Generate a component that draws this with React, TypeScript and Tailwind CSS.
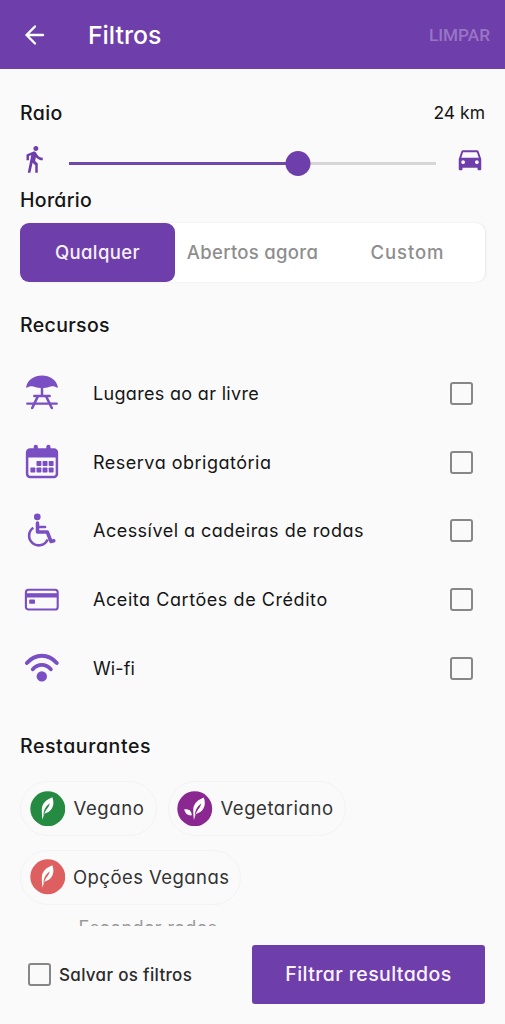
import React, { useState } from 'react';
import { MdDirectionsCar, MdDirectionsWalk } from 'react-icons/md';

const ParasolIcon = () => (
  <svg viewBox="0 0 36 36" className="h-9 w-9 text-[#7b4fc4]" fill="none" stroke="currentColor" strokeLinecap="round">
    <path
      d="M2.200 11.700C4 4.600 10.200.6 18 .6s14 4 15.800 11.100c.2.900-.5 1.300-1.200.9-2.200-1.600-5-1.900-7.600-.7-4 1.500-10 1.500-14 0-2.600-1.200-5.400-.9-7.600.7-.7.400-1.400 0-1.200-.9z"
      fill="currentColor"
      stroke="none"
    />
    <path d="M18 10v10" strokeWidth="2.500" />
    <path d="M10.300 21h15.400M3.300 28.600h29.400" strokeWidth="2.400" />
    <path d="M13.800 21.500L8.200 33M22.200 21.500L27.800 33" strokeWidth="2.600" />
  </svg>
);

const CalendarIcon = () => (
  <svg viewBox="0 0 36 36" className="h-9 w-9 text-[#7b4fc4]" fill="currentColor">
    <rect x="3.100" y="5.600" width="29.800" height="27.400" rx="3" fill="none" stroke="currentColor" strokeWidth="2.500" />
    <path d="M3 6h30v7.500H3z" />
    <rect x="9.700" y="0.700" width="4.200" height="7" rx="2" />
    <rect x="22.300" y="0.700" width="4.200" height="7" rx="2" />
    <rect x="12.500" y="17" width="4.900" height="4.900" rx="0.700" />
    <rect x="18.600" y="17" width="4.900" height="4.900" rx="0.700" />
    <rect x="24.700" y="17" width="4.900" height="4.900" rx="0.700" />
    <rect x="6.400" y="23.600" width="4.900" height="4.900" rx="0.700" />
    <rect x="12.500" y="23.600" width="4.900" height="4.900" rx="0.700" />
    <rect x="18.600" y="23.600" width="4.900" height="4.900" rx="0.700" />
    <rect x="24.700" y="23.600" width="4.900" height="4.900" rx="0.700" />
  </svg>
);

const WheelchairIcon = () => (
  <svg viewBox="0 0 36 36" className="h-9 w-9 text-[#7b4fc4]" fill="none" stroke="currentColor" strokeLinecap="round" strokeLinejoin="round">
    <circle cx="13.300" cy="3.900" r="3.300" fill="currentColor" stroke="none" />
    <path d="M13.500 10v9h9.800l3.700 9.500 2.800-.8" strokeWidth="3.500" />
    <path d="M14 14h7" strokeWidth="2.600" />
    <path d="M9.300 14.800a9.600 9.600 0 1 0 14.300 11.600" strokeWidth="2.600" strokeLinecap="butt" />
  </svg>
);

const CardIcon = () => (
  <svg viewBox="0 0 36 36" className="h-9 w-9 text-[#7b4fc4]" fill="currentColor">
    <rect x="1.900" y="7.700" width="31.800" height="19.800" rx="2.600" fill="none" stroke="currentColor" strokeWidth="2.100" />
    <path d="M2 11.200h31.600v4.300H2z" />
    <rect x="5.200" y="17.600" width="5.800" height="4.200" rx="0.900" />
  </svg>
);

const WifiIcon = () => (
  <svg viewBox="0 0 36 36" className="h-9 w-9 text-[#7b4fc4]" fill="none" stroke="currentColor" strokeWidth="3.900" strokeLinecap="round">
    <path d="M2.900 13C11.300 3.300 24.400 3.300 32.800 13" />
    <path d="M8.800 19.200c5.200-5.800 12.800-5.800 18 0" />
    <circle cx="17.800" cy="26.400" r="5.200" fill="currentColor" stroke="none" />
  </svg>
);

const Leaf = () => (
  <>
    <path
      d="M22.700 6.300C17 8.500 12.300 12 12 18.200c-.1 4 .2 7.500.7 10.900.7-2.600 1.200-4.500 2.100-6.200C21 21.400 26 15.500 22.700 6.300z"
      fill="#fff"
    />
    <path d="M13.700 25.200c-.2-5 2-9.800 6.400-12.700-.9 3.700-3 5.700-4.300 7.700-.9 1.500-1.600 3-2.100 5z" fill="currentColor" />
  </>
);

const VeganBadge = ({ className }: { className: string }) => (
  <svg viewBox="0 0 36 36" className={`h-[35.5px] w-[35.5px] shrink-0 ${className}`}>
    <circle cx="18" cy="18" r="17.700" fill="currentColor" />
    <Leaf />
  </svg>
);

const VegetarianBadge = () => (
  <svg viewBox="0 0 36 36" className="h-[35.5px] w-[35.5px] shrink-0 text-[#8a2791]">
    <circle cx="18" cy="18" r="17.700" fill="currentColor" />
    <g transform="translate(4.500 0.300)">
      <Leaf />
    </g>
    <path d="M7.200 18.700c4.800-.6 7.700 1.500 7.800 6-4.200.4-6.500-1.700-7.800-6z" fill="#fff" />
  </svg>
);

const features = [
  { icon: ParasolIcon, label: 'Lugares ao ar livre', tracking: 'tracking-[0.32px]' },
  { icon: CalendarIcon, label: 'Reserva obrigatória', tracking: 'tracking-[0.5px]' },
  { icon: WheelchairIcon, label: 'Acessível a cadeiras de rodas', tracking: 'tracking-[0.48px]' },
  { icon: CardIcon, label: 'Aceita Cartões de Crédito', tracking: 'tracking-[0.56px]' },
  { icon: WifiIcon, label: 'Wi-fi', tracking: 'tracking-[0.1px]' },
];

const hours = [
  { label: 'Qualquer', tracking: 'tracking-[0.4px]' },
  { label: 'Abertos agora', tracking: 'tracking-[0.3px]' },
  { label: 'Custom', tracking: 'tracking-[0.9px]' },
];

const Checkbox = ({ checked, onClick, label }: { checked: boolean; onClick: () => void; label: string }) => (
  <button
    role="checkbox"
    aria-checked={checked}
    aria-label={label}
    onClick={onClick}
    className={`h-[23px] w-[23px] shrink-0 rounded-[3px] border-[2.5px] ${
      checked ? 'border-[#6e3eab] bg-[#6e3eab]' : 'border-[#878787]'
    }`}
  />
);

export default function App() {
  const [selected, setSelected] = useState('Qualquer');
  const [checked, setChecked] = useState([] as string[]);
  const [save, setSave] = useState(false);
  const radius = 62.5;

  const toggle = (label: string) => {
    setChecked((prev) => (prev.includes(label) ? prev.filter((l) => l !== label) : [...prev, label]));
  };

  return (
    <div className="flex h-[1024px] w-[505px] flex-col overflow-hidden bg-[#fafafa] font-['Inter',sans-serif] whitespace-nowrap text-[#151515] [font-feature-settings:'cv11']">
      {/* App bar */}
      <header className="flex h-[69px] shrink-0 items-center bg-[#6e3eab] pr-[15px] pl-6 text-white">
        <svg viewBox="0 0 22 22" className="h-[22px] w-[22px]" fill="none" stroke="currentColor" strokeWidth="2.4" strokeLinecap="round" strokeLinejoin="round">
          <path d="M19 11H2.500M11 2.500L2.500 11l8.500 8.500" />
        </svg>
        <h1 className="ml-[42px] pt-[2px] text-[24.8px] font-medium">Filtros</h1>
        <button className="ml-auto pt-[2px] font-['Roboto',sans-serif] text-[17.2px] font-medium text-[#9875c4]">LIMPAR</button>
      </header>

      <main className="h-[857px] shrink-0 overflow-hidden px-5 pt-[30px]">
        {/* Radius */}
        <div className="flex h-7 items-center justify-between">
          <h2 className="pt-px text-[19.5px] font-medium tracking-[0.4px]">Raio</h2>
          <span className="text-[17.5px]">24 km</span>
        </div>
        <div className="mt-[17px] flex h-[38px]">
          <MdDirectionsWalk className="-ml-px h-[30px] w-[30px] shrink-0 text-[#6e3eab]" />
          <div className="relative ml-5 flex w-[368px] items-center">
            <div className="h-[3px] w-full bg-[#d6d6d6]">
              <div className="h-full bg-[#6e48aa]" style={{ width: `${radius}%` }} />
            </div>
            <div
              className="absolute h-[25px] w-[25px] -translate-x-1/2 rounded-full bg-[#6e3eab]"
              style={{ left: `${radius}%` }}
            />
          </div>
          <MdDirectionsCar className="ml-[19px] h-[30px] w-[30px] shrink-0 text-[#6e3eab]" />
        </div>

        {/* Opening hours */}
        <h2 className="mt-1 flex h-7 items-center pt-px text-[19.5px] font-medium tracking-[0.3px]">Horário</h2>
        <div className="mt-[9px] grid h-[59px] grid-cols-3 rounded-[9px] bg-white shadow-[1px_0_2px_rgba(0,0,0,0.08)]">
          {hours.map((h) => (
            <button
              key={h.label}
              onClick={() => setSelected(h.label)}
              className={`rounded-[9px] text-[18.5px] font-medium ${h.tracking} ${
                selected === h.label ? 'bg-[#6e3eab] text-[#f6effc]' : 'text-[#8e8e8e]'
              }`}
            >
              {h.label}
            </button>
          ))}
        </div>

        {/* Features */}
        <h2 className="mt-[30px] flex h-7 items-center text-[19.5px] font-medium tracking-[0.35px]">Recursos</h2>
        <ul className="mt-[19px]">
          {features.map((f) => {
            const Icon = f.icon;
            return (
              <li key={f.label} className="flex h-[68.75px] items-center pr-3 pl-1">
                <Icon />
                <span className={`ml-[33px] flex-1 text-[18px] ${f.tracking}`}>{f.label}</span>
                <Checkbox label={f.label} checked={checked.includes(f.label)} onClick={() => toggle(f.label)} />
              </li>
            );
          })}
        </ul>

        {/* Restaurants */}
        <h2 className="mt-[30px] flex h-7 items-center text-[19.5px] font-medium tracking-[0.6px]">Restaurantes</h2>
        <div className="mt-5 flex flex-wrap gap-x-[11px] gap-y-[13.75px] text-[18.5px] text-[#333]">
          <button className="flex h-[55px] w-[137px] items-center gap-2 rounded-full border border-[#f3f3f3] pl-[8.5px]">
            <VeganBadge className="text-[#258b42]" />
            <span className="pt-[1.5px] pl-[0.5px] tracking-[0.6px]">Vegano</span>
          </button>
          <button className="flex h-[55px] w-[178px] items-center gap-2 rounded-full border border-[#f3f3f3] pl-[8px]">
            <VegetarianBadge />
            <span className="pt-[1.5px] tracking-[0.55px]">Vegetariano</span>
          </button>
          <button className="flex h-[55px] w-[221px] items-center gap-2 rounded-full border border-[#f3f3f3] pl-[8.5px]">
            <VeganBadge className="text-[#de5f5f]" />
            <span className="pt-[1.5px] tracking-[0.45px]">Opções Veganas</span>
          </button>
          <div className="flex h-[18px] w-full items-center pl-[58.5px] text-[18px] tracking-[0.4px] text-[#999]">Esconder redes</div>
        </div>
      </main>

      {/* Bottom bar */}
      <footer className="flex flex-1 items-center pr-5 pb-px pl-7">
        <Checkbox label="Salvar os filtros" checked={save} onClick={() => setSave(!save)} />
        <span className="ml-2 pt-[2px] text-[17px] font-medium tracking-[0.32px] text-[#2b2b2b]">Salvar os filtros</span>
        <button className="ml-auto h-[59px] w-[233px] rounded-[3px] bg-[#6e3eab] text-[19.5px] font-medium tracking-[0.4px] text-[#f9f3fd]">
          Filtrar resultados
        </button>
      </footer>
    </div>
  );
}
